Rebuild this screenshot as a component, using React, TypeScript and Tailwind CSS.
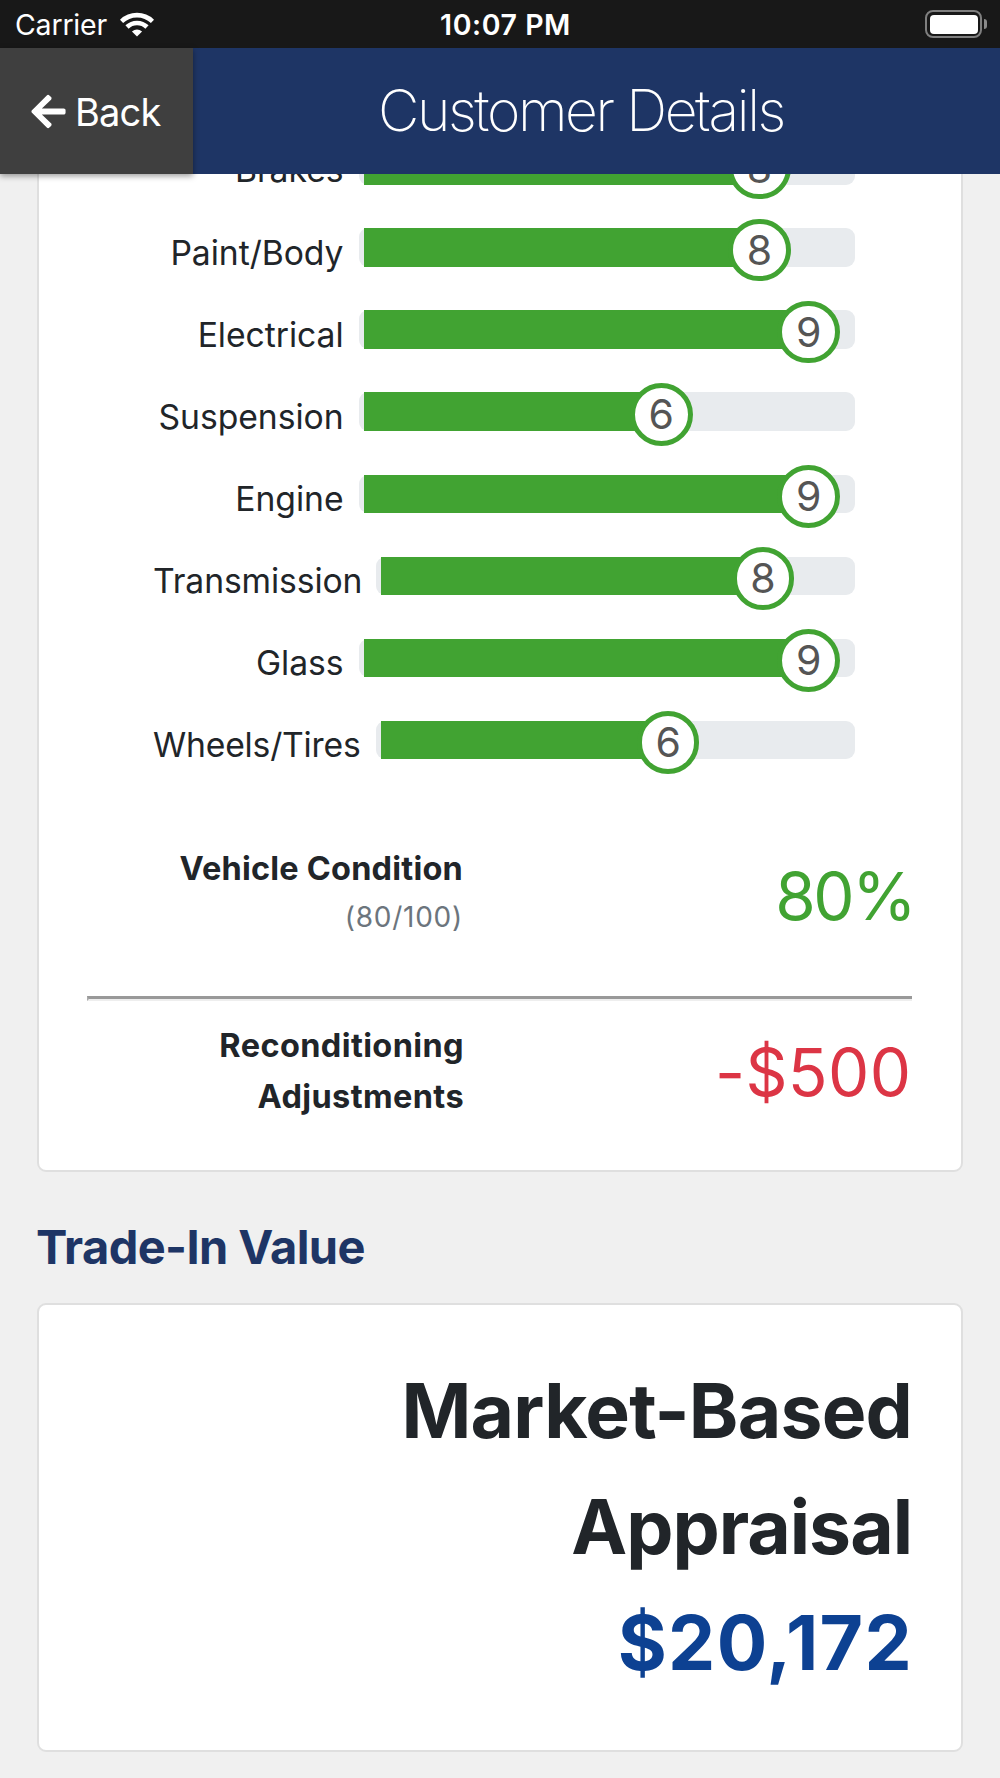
import { FaArrowLeft } from "react-icons/fa";

type Rating = { label: string; score: number; labelClass: string };

const SHORT = "w-[191px] tracking-[-0.05px]";

const ratings: Rating[] = [
  { label: "Brakes", score: 8, labelClass: SHORT },
  { label: "Paint/Body", score: 8, labelClass: SHORT },
  { label: "Electrical", score: 9, labelClass: SHORT },
  { label: "Suspension", score: 6, labelClass: SHORT },
  { label: "Engine", score: 9, labelClass: SHORT },
  { label: "Transmission", score: 8, labelClass: "w-[208px] tracking-[-0.1px]" },
  { label: "Glass", score: 9, labelClass: SHORT },
  { label: "Wheels/Tires", score: 6, labelClass: "w-[208px] tracking-[-0.2px]" },
];

function WifiIcon() {
  return (
    <svg width="34" height="25" viewBox="0 0 34 25" fill="none" stroke="white" strokeWidth="4.6">
      <path d="M1.5 9.4A22.3 22.3 0 0 1 32.5 9.4" />
      <path d="M7 15A14.4 14.4 0 0 1 27 15" />
      <path d="M17 24.5L11.9 19.4Q17 15.6 22.1 19.4Z" fill="white" stroke="none" />
    </svg>
  );
}

function StatusBar() {
  return (
    <div className="grid h-[48px] grid-cols-[1fr_auto_1fr] items-center bg-[#181818] text-[28.5px] leading-[46px] text-white">
      <div className="flex items-center pl-[15px]">
        <span className="pt-[2px] tracking-[-0.2px]">Carrier</span>
        <span className="ml-[13px]"><WifiIcon /></span>
      </div>
      <span className="pt-[2px] pl-[11px] font-semibold tracking-[0.55px]">10:07 PM</span>
      <div className="flex items-center justify-end gap-[2px] pr-[13px]">
        <div className="h-[28px] w-[57px] rounded-[8px] border-2 border-[#7f7f7f] p-[2.5px]">
          <div className="h-full rounded-[4px] bg-white" />
        </div>
        <div className="h-[10px] w-[3px] rounded-r-full bg-[#8a8a8a]" />
      </div>
    </div>
  );
}

function NavBar() {
  return (
    <header className="relative z-10 flex h-[126px] bg-[#1e3565] text-white">
      <button className="flex w-[193px] items-center bg-[#3f3f3f] pl-[29px] shadow-[0_2px_6px_rgba(0,0,0,0.4)]">
        <FaArrowLeft size={39} />
        <span className="ml-[7px] pt-px text-[38px] leading-[46px] tracking-[-0.8px]">Back</span>
      </button>
      <h1 className="flex-1 pr-[31px] text-center text-[57px] leading-[126px] font-extralight tracking-[-2.4px]">
        Customer Details
      </h1>
    </header>
  );
}

function RatingRow({ label, score, labelClass }: Rating) {
  return (
    <div className="flex h-[82.1px] items-center">
      <span className={`${labelClass} shrink-0 pt-[10px] pr-[0.5px] text-right text-[33.7px] leading-[44px] whitespace-nowrap`}>
        {label}
      </span>
      <div className="ml-[15px] h-[38.6px] flex-1 rounded-[9px] bg-[#e8ebee] pl-[5px]">
        <div className="relative h-full bg-[#41a332]" style={{ width: `${score * 10}%` }}>
          <span className="absolute top-[-9.5px] right-[-34px] flex size-[62.6px] items-center justify-center rounded-full border-[5px] border-[#41a332] bg-white pt-px text-[41px] text-[#555]">
            {score}
          </span>
        </div>
      </div>
    </div>
  );
}

export default function App() {
  return (
    <div className="h-[1778px] w-[1000px] overflow-hidden bg-[#f0f0f0] font-['Inter',sans-serif] text-[#212529]">
      <StatusBar />
      <NavBar />
      <main className="h-[1604px] overflow-hidden px-[37px]">
        <section className="-mt-[50px] h-[1048px] rounded-[9px] border-2 border-[#dfdfdf] bg-white px-[48px]">
          <div className="-mt-[1.6px] pr-[58px] pl-[66px]">
            {ratings.map((r) => (
              <RatingRow key={r.label} {...r} />
            ))}
          </div>
          <div className="mt-[62.6px] flex h-[152px] justify-between">
            <div className="w-[376px] text-right">
              <p className="text-[32.5px] leading-[50.7px] font-bold tracking-[0.2px]">Vehicle Condition</p>
              <p className="text-[28px] leading-[46px] tracking-[0.75px] text-[#6c757d]">(80/100)</p>
            </div>
            <p className="mr-[-1px] pt-[4px] text-[65.5px] leading-[98px] tracking-[-2.5px] text-[#41a332]">80%</p>
          </div>
          <hr className="mr-px h-[5px] border-t-[3px] border-b-2 border-l-2 border-t-[#999] border-b-[#eee] border-l-[#aaa]" />
          <div className="mt-[19px] flex justify-between">
            <p className="w-[377px] text-right text-[32.5px] leading-[51px] font-bold tracking-[0.38px]">
              Reconditioning
              <br />
              Adjustments
            </p>
            <p className="pt-[4px] pr-[1.5px] text-[65.5px] leading-[98px] tracking-[0.4px] text-[#dc3545]">-$500</p>
          </div>
        </section>
        <h2 className="mt-[47px] ml-[-1px] text-[47px] leading-[56px] font-bold tracking-[-0.6px] text-[#1e3565]">
          Trade-In Value
        </h2>
        <section className="mt-[28px] h-[449px] rounded-[9px] border-2 border-[#dfdfdf] bg-white px-[49px] pt-[48px] text-right text-[75px] leading-[116px] font-bold">
          <p className="tracking-[-0.8px]">Market-Based</p>
          <p className="tracking-[-1px]">Appraisal</p>
          <p className="mr-[-1px] tracking-[1.3px] text-[#0d4192]">$20,172</p>
        </section>
      </main>
    </div>
  );
}
